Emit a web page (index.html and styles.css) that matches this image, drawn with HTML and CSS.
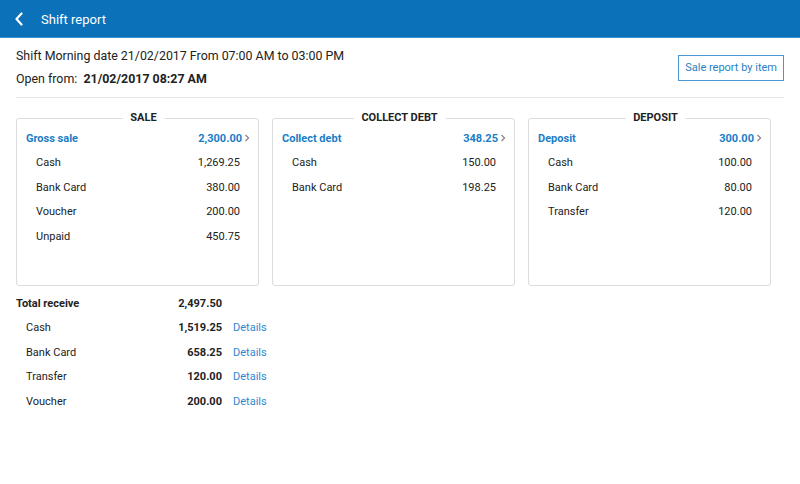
FILE: index.html
```html
<!DOCTYPE html>
<html>
<head>
<meta charset="utf-8">
<link rel="stylesheet" href="styles.css">
</head>
<body>
<header class="appbar">
  <svg class="back" width="10" height="14" viewBox="0 0 10 14"><path d="M7.5 1.5 L2.5 7 L7.5 12.5" fill="none" stroke="#fff" stroke-width="2.2" stroke-linecap="round" stroke-linejoin="round"/></svg>
  <span class="title">Shift report</span>
</header>
<section class="summary">
  <div class="info">
    <div class="line">Shift Morning date 21/02/2017 From 07:00 AM to 03:00 PM</div>
    <div class="line">Open from:&nbsp; <b>21/02/2017 08:27 AM</b></div>
  </div>
  <button class="btn">Sale report by item</button>
</section>
<section class="cards">
  <div class="card">
    <div class="card-title">SALE</div>
    <div class="row head"><span>Gross sale</span><span class="val">2,300.00</span><svg class="chev" width="10" height="10" viewBox="0 0 10 10"><path d="M3.5 2 L6.5 5 L3.5 8" fill="none" stroke="#888" stroke-width="1.3"/></svg></div>
    <div class="row sub"><span>Cash</span><span>1,269.25</span></div>
    <div class="row sub"><span>Bank Card</span><span>380.00</span></div>
    <div class="row sub"><span>Voucher</span><span>200.00</span></div>
    <div class="row sub"><span>Unpaid</span><span>450.75</span></div>
  </div>
  <div class="card">
    <div class="card-title">COLLECT DEBT</div>
    <div class="row head"><span>Collect debt</span><span class="val">348.25</span><svg class="chev" width="10" height="10" viewBox="0 0 10 10"><path d="M3.5 2 L6.5 5 L3.5 8" fill="none" stroke="#888" stroke-width="1.3"/></svg></div>
    <div class="row sub"><span>Cash</span><span>150.00</span></div>
    <div class="row sub"><span>Bank Card</span><span>198.25</span></div>
  </div>
  <div class="card">
    <div class="card-title">DEPOSIT</div>
    <div class="row head"><span>Deposit</span><span class="val">300.00</span><svg class="chev" width="10" height="10" viewBox="0 0 10 10"><path d="M3.5 2 L6.5 5 L3.5 8" fill="none" stroke="#888" stroke-width="1.3"/></svg></div>
    <div class="row sub"><span>Cash</span><span>100.00</span></div>
    <div class="row sub"><span>Bank Card</span><span>80.00</span></div>
    <div class="row sub"><span>Transfer</span><span>120.00</span></div>
  </div>
</section>
<section class="totals">
  <div class="t-label total">Total receive</div><div class="t-val">2,497.50</div><div></div>
  <div class="t-label">Cash</div><div class="t-val">1,519.25</div><a class="details">Details</a>
  <div class="t-label">Bank Card</div><div class="t-val">658.25</div><a class="details">Details</a>
  <div class="t-label">Transfer</div><div class="t-val">120.00</div><a class="details">Details</a>
  <div class="t-label">Voucher</div><div class="t-val">200.00</div><a class="details">Details</a>
</section>
</body>
</html>
```
FILE: styles.css
```css
* { box-sizing: border-box; }
html, body { margin: 0; padding: 0; background: #fff; }
body {
  font-family: Roboto, "Liberation Sans", sans-serif;
  color: #222;
  width: 800px;
  height: 484px;
  overflow: hidden;
}
.appbar {
  height: 38px;
  background: #0b72b9;
  border-bottom: 1px solid #3a8fcc;
  display: flex;
  align-items: center;
  padding: 1px 0 0 14px;
  color: #fff;
}
.back { margin-right: 17px; }
.title { font-size: 13px; }
.summary {
  margin: 0 16px;
  padding: 6px 0 7px;
  border-bottom: 1px solid #e3e3e3;
  display: flex;
  justify-content: space-between;
  align-items: center;
}
.line { font-size: 12.4px; line-height: 23px; }
.line b { font-weight: 700; }
.btn {
  font-family: inherit;
  font-size: 11px;
  color: #2a7fc4;
  background: #fff;
  border: 1px solid #4b97d3;
  height: 26px;
  padding: 0 6px;
  border-radius: 0;
  margin-top: 1px;
}
.cards {
  display: grid;
  grid-template-columns: repeat(3, 243px);
  column-gap: 13px;
  margin: 20px 16px 0;
}
.card {
  position: relative;
  height: 168px;
  border: 1px solid #dcdcdc;
  border-radius: 3px;
  padding: 7px 18px 0 9px;
}
.card-title {
  position: absolute;
  top: -7px;
  left: calc(50% + 6px);
  transform: translateX(-50%);
  background: #fff;
  padding: 0 8px;
  font-size: 11px;
  font-weight: 700;
  line-height: 12px;
  white-space: nowrap;
}
.row {
  display: flex;
  align-items: center;
  height: 24.5px;
  font-size: 11px;
}
.row span:first-child { flex: 1; }
.row.sub { padding-left: 10px; }
.row.head { color: #1b7dc6; font-weight: 700; }
.chev { margin-right: -12px; flex: none; }
.totals {
  display: grid;
  grid-template-columns: 150px 56px auto;
  grid-auto-rows: 24.5px;
  align-items: center;
  margin: 5px 16px 0;
  font-size: 11px;
  width: 300px;
}
.t-label { padding-left: 10px; }
.t-label.total { padding-left: 0; font-weight: 700; }
.t-val { text-align: right; font-weight: 700; }
.details { color: #2f88cf; padding-left: 11px; }
```
